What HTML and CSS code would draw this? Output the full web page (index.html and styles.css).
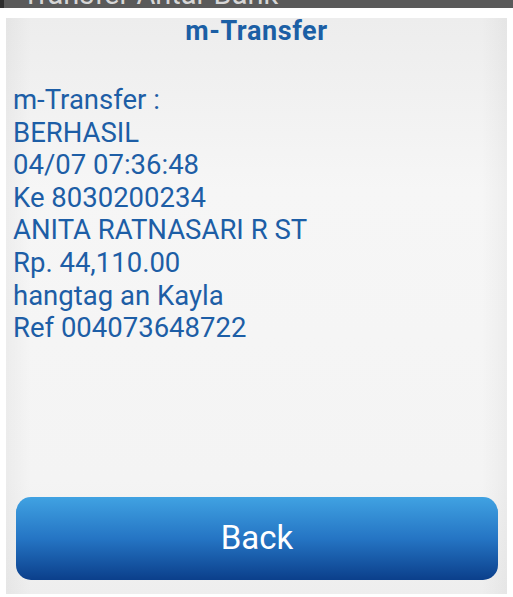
FILE: index.html
```html
<!DOCTYPE html>
<html>
<head>
<meta charset="utf-8">
<link rel="stylesheet" href="styles.css">
</head>
<body>
<div class="topbar">
  <span class="topbar-icon"></span>
  <span class="topbar-title">Transfer Antar Bank</span>
</div>
<div class="card">
  <h1 class="title">m-Transfer</h1>
  <div class="message">
    <div>m-Transfer :</div>
    <div>BERHASIL</div>
    <div>04/07 07:36:48</div>
    <div>Ke 8030200234</div>
    <div>ANITA RATNASARI R ST</div>
    <div>Rp. 44,110.00</div>
    <div>hangtag an Kayla</div>
    <div>Ref 004073648722</div>
  </div>
  <div class="spacer"></div>
  <button class="back">Back</button>
</div>
</body>
</html>
```
FILE: styles.css
```css
html, body {
  margin: 0;
  padding: 0;
  background: #ffffff;
  width: 513px;
  height: 597px;
  overflow: hidden;
  font-family: Roboto, "Noto Sans", sans-serif;
}
.topbar {
  height: 8px;
  background: #5a5a5a;
  display: flex;
  align-items: flex-start;
  overflow: hidden;
}
.topbar-icon {
  width: 4px;
  height: 8px;
  background: #2e2e2e;
  flex: none;
}
.topbar-title {
  margin-left: 18px;
  margin-top: -20px;
  font-size: 29px;
  line-height: 29px;
  color: #d6d6d6;
  white-space: nowrap;
}
.card {
  margin: 10px 6px 0 6px;
  height: 576px;
  box-sizing: border-box;
  background:
    linear-gradient(to right, rgba(0,0,0,0.035), rgba(0,0,0,0) 5%, rgba(0,0,0,0) 95%, rgba(0,0,0,0.035)),
    linear-gradient(to bottom, #ededed, #f6f6f6 30%, #f4f4f4 80%, #eeeeee);
  display: flex;
  flex-direction: column;
  padding: 0 9px 14px 7px;
}
.title {
  margin: 0;
  text-align: center;
  font-size: 27px;
  font-weight: bold;
  letter-spacing: 0.6px;
  color: #1b5fa5;
  line-height: 26px;
  padding-left: 2px;
}
.message {
  margin-top: 40px;
  font-size: 27.5px;
  line-height: 32.6px;
  color: #1d5ea6;
}
.spacer {
  flex: 1;
}
.back {
  display: block;
  width: 482px;
  height: 83px;
  margin-left: 3px;
  border: none;
  border-radius: 15px;
  background: linear-gradient(to bottom, #40a2e2, #2575c4 50%, #0b3f8b);
  color: #ffffff;
  font-family: Roboto, "Noto Sans", sans-serif;
  font-size: 33px;
  padding: 0 0 3px 0;
}
```
